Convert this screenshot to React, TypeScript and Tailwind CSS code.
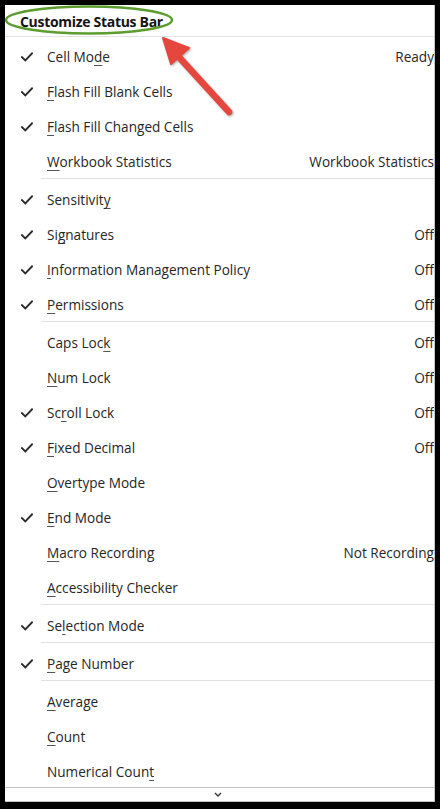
import React from "react";

type Item = {
  pre: string;
  key: string;
  post: string;
  checked?: boolean;
  value?: string;
  sepAfter?: boolean;
};

const items: Item[] = [
  { pre: "Cell Mo", key: "d", post: "e", checked: true, value: "Ready" },
  { pre: "", key: "F", post: "lash Fill Blank Cells", checked: true },
  { pre: "", key: "F", post: "lash Fill Changed Cells", checked: true },
  { pre: "", key: "W", post: "orkbook Statistics", value: "Workbook Statistics", sepAfter: true },
  { pre: "Sensitivit", key: "y", post: "", checked: true },
  { pre: "Si", key: "g", post: "natures", checked: true, value: "Off" },
  { pre: "", key: "I", post: "nformation Management Policy", checked: true, value: "Off" },
  { pre: "", key: "P", post: "ermissions", checked: true, value: "Off", sepAfter: true },
  { pre: "Caps Loc", key: "k", post: "", value: "Off" },
  { pre: "", key: "N", post: "um Lock", value: "Off" },
  { pre: "Sc", key: "r", post: "oll Lock", checked: true, value: "Off" },
  { pre: "", key: "F", post: "ixed Decimal", checked: true, value: "Off" },
  { pre: "", key: "O", post: "vertype Mode" },
  { pre: "", key: "E", post: "nd Mode", checked: true },
  { pre: "", key: "M", post: "acro Recording", value: "Not Recording" },
  { pre: "", key: "A", post: "ccessibility Checker", sepAfter: true },
  { pre: "Se", key: "l", post: "ection Mode", checked: true, sepAfter: true },
  { pre: "", key: "P", post: "age Number", checked: true, sepAfter: true },
  { pre: "", key: "A", post: "verage" },
  { pre: "", key: "C", post: "ount" },
  { pre: "Numerical Coun", key: "t", post: "" },
];

function Check() {
  return (
    <svg width="12" height="10" viewBox="0 0 12 10" fill="none">
      <path d="M1 5.2 L4.3 8.4 L11 1.4" stroke="#2a2a2a" strokeWidth="1.9" strokeLinecap="square" strokeLinejoin="miter" />
    </svg>
  );
}

export default function App() {
  return (
    <div
      className="relative w-[440px] h-[809px] bg-black pt-[5px] pl-[5px] pr-[5px] pb-[7px]"
      style={{ fontFamily: '"Open Sans", "Noto Sans", sans-serif' }}
    >
      <div className="h-full bg-white border-r border-b border-[#c4c4c4] overflow-hidden flex flex-col text-[#262626]">
        <div className="h-[32px] shrink-0 flex items-center pl-[15px] pt-[1px] border-b border-[#e3e3e3] text-[14px] font-bold tracking-[-0.3px] text-[#141414]">
          Customize Status Bar
        </div>
        {items.map((it, i) => (
          <React.Fragment key={i}>
            <div className="h-[35px] shrink-0 flex items-center pt-[5px] text-[13.6px]">
              <div className="w-[42px] shrink-0 pl-[16px] flex items-center">
                {it.checked ? <Check /> : null}
              </div>
              <span className="whitespace-nowrap">
                {it.pre}
                <span className="underline underline-offset-[3px] decoration-[#555]">{it.key}</span>
                {it.post}
              </span>
              {it.value ? (
                <span className="ml-auto whitespace-nowrap">{it.value}</span>
              ) : null}
            </div>
            {it.sepAfter ? (
              <div className="h-[3px] shrink-0 flex items-center pl-[36px]">
                <div className="h-px w-full bg-[#e1e1e1]" />
              </div>
            ) : null}
          </React.Fragment>
        ))}
        <div className="h-[14px] shrink-0 border-t border-[#c4c4c4] flex items-center justify-center">
          <svg width="8" height="5" viewBox="0 0 8 5" fill="none" className="ml-[-3px]">
            <path d="M1 1 L4 4 L7 1" stroke="#333" strokeWidth="1.4" />
          </svg>
        </div>
      </div>
      <svg
        className="absolute inset-0 pointer-events-none"
        width="440"
        height="809"
        viewBox="0 0 440 809"
      >
        <ellipse cx="89" cy="20" rx="83" ry="13.5" fill="none" stroke="#5c9d2f" strokeWidth="2.5" />
        <g style={{ filter: "drop-shadow(1px 1px 1px rgba(0,0,0,0.35))" }}>
          <line x1="229" y1="112" x2="177" y2="55" stroke="#e5463d" strokeWidth="6.5" strokeLinecap="round" />
          <polygon points="163,38 189,48 171,64" fill="#e5463d" stroke="#e5463d" strokeWidth="2" strokeLinejoin="round" />
        </g>
      </svg>
    </div>
  );
}
